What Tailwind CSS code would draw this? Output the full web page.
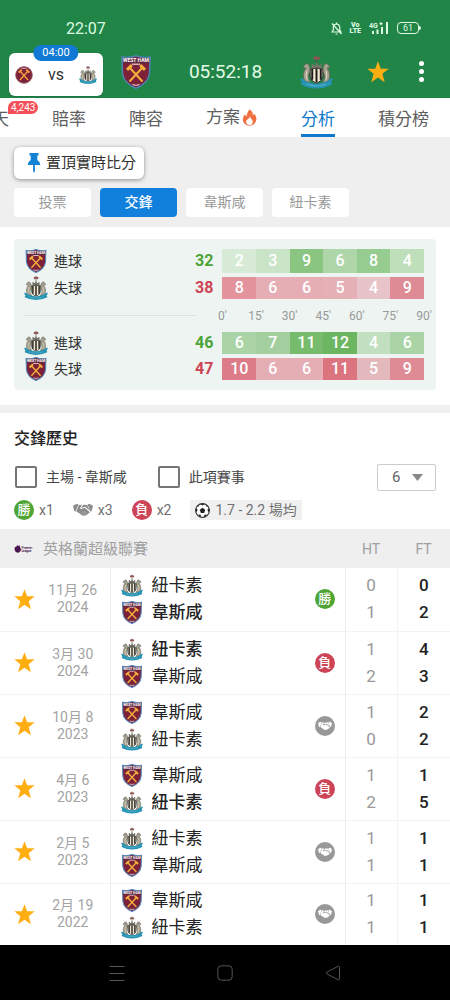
<!DOCTYPE html>
<html lang="zh-Hant">
<head>
<meta charset="utf-8">
<meta name="viewport" content="width=device-width, initial-scale=1">
<title>韋斯咸 vs 紐卡素 - 分析</title>
<script src="https://cdn.jsdelivr.net/npm/@tailwindcss/browser@4"></script>
</head>
<body class="flex min-h-screen flex-col bg-white font-['Roboto','Noto_Sans_CJK_TC',sans-serif] text-[#222]">

<svg class="hidden" aria-hidden="true">
  <symbol id="whu" viewBox="0 0 30 34">
    <path d="M1 2Q8 3.500 15 .8Q22 3.500 29 2L28.500 18Q27.500 28 15 33.300Q2.500 28 1.500 18Z" fill="#7c2138" stroke="#4f83b8" stroke-width="1.500"/>
    <path d="M2.300 3.400Q9 4.500 15 2.500Q21 4.500 27.700 3.400V8.500H2.300Z" fill="#62293f"/>
    <text x="15" y="7" text-anchor="middle" font-size="5" font-weight="700" fill="#fff">WEST HAM</text>
    <path d="M11 9.200H19" stroke="#e8d5dc" stroke-width="1.200"/>
    <path d="M8.500 12.500L21.500 26.500M21.500 12.500L8.500 26.500" stroke="#f2b13c" stroke-width="2"/>
    <path d="M6 14.800L10.800 10.200M24 14.800L19.200 10.200" stroke="#f2b13c" stroke-width="3"/>
    <path d="M11.500 29.600Q15 31 18.500 29.600" stroke="#e8d5dc" stroke-width="1.100" fill="none"/>
  </symbol>
  <symbol id="whu-round" viewBox="0 0 20 20">
    <circle cx="10" cy="10" r="9.200" fill="#7c2138" stroke="#8d4a5c" stroke-width="1"/>
    <path d="M5.500 5.500L14.500 15.500M14.500 5.500L5.500 15.500" stroke="#f2a13c" stroke-width="1.500"/>
    <path d="M4 7.400L7.400 4M16 7.400L12.600 4" stroke="#f2a13c" stroke-width="2.200"/>
    <path d="M7 2.600H13" stroke="#d9b5c0" stroke-width="1"/>
  </symbol>
  <symbol id="nufc" viewBox="0 0 34 34">
    <path d="M17 0V9" stroke="#555" stroke-width="1"/>
    <path d="M14 1.500Q17 .3 21 2L19.500 4.600Q17 3.500 14 4.600Z" fill="#91554f"/>
    <path d="M12 15V8.500H14V10H16V8H18.500V10H20.500V8.500H22V15Z" fill="#77756a"/>
    <path d="M10 12Q8 6.500 5.500 9L3 12L6 13Q3 17 3.500 22Q3.500 25 6 27L11 28Q7 23 9 19.500Q11.500 16 10 12Z" fill="#a5a18f" stroke="#666257" stroke-width=".8"/>
    <path d="M24 12Q26 6.500 28.500 9L31 12L28 13Q31 17 30.500 22Q30.500 25 28 27L23 28Q27 23 25 19.500Q22.500 16 24 12Z" fill="#a5a18f" stroke="#666257" stroke-width=".8"/>
    <path d="M7 16Q5.500 20 7.500 25M27 16Q28.500 20 26.500 25" stroke="#e0dcc9" stroke-width="1" fill="none"/>
    <path d="M10.500 14Q17 12 23.500 14V22Q23 26 17 29Q11 26 10.500 22Z" fill="#f1e7cf" stroke="#222" stroke-width=".9"/>
    <path d="M12.600 14V25M17 13.500V28M21.400 14V25" stroke="#1b1b1b" stroke-width="2"/>
    <path d="M0 24Q3 23 5 26Q17 32 29 26Q31 23 34 24L32 27.500L33 30Q25 34 17 34Q9 34 1 30L2 27.500Z" fill="#2593b4"/>
    <path d="M7 29.500Q17 33 27 29.500" stroke="#8cc8d9" stroke-width=".9" stroke-dasharray="1.500 .8" fill="none"/>
  </symbol>
  <symbol id="star" viewBox="0 0 20 20">
    <path d="M10 .3L12.500 7H19.700L14 11.600L16.100 19.300L10 14.900L3.900 19.300L6 11.600L.3 7H7.500Z" fill="currentColor"/>
  </symbol>
  <symbol id="shake" viewBox="0 0 24 16">
    <path d="M0 3L4.500 .5L6.500 1.500L3 10L1.500 9Z M24 3L19.500 .5L17.500 1.500L21 10L22.500 9Z" fill="currentColor"/>
    <path d="M7 2L11 1.800L8.500 5.500Q9 8 12 6L14 5.300L20 10.300Q20.400 12 18.500 12Q18.300 13.700 16.500 13.300Q15.800 15 14 14.200Q12.600 15.800 11 14.300L4 9.800Z" fill="currentColor"/>
    <path d="M12.300 1.800L17 2L20.200 8.900L14.600 4L11.500 5Q10 5.700 10 4.900Z" fill="currentColor"/>
    <path d="M12.500 9.500L16 12.300M10.500 11L13.500 13.700" stroke="#fff" stroke-opacity=".5" stroke-width=".6"/>
  </symbol>
</svg>

<header class="bg-[#228548] text-white">
  <div class="flex h-[45px] items-end justify-between pr-[29px] pl-[66px] text-[#dcfbe3]">
    <time class="pb-1.5 text-base leading-5">22:07</time>
    <div class="flex items-center gap-2 pb-2.5">
      <svg class="h-[13px] w-[11px]" viewBox="0 0 11 13" fill="none" stroke="currentColor" stroke-width="1.200"><path d="M1 10H10L8.700 8V5Q8.500 2.300 5.500 2Q2.500 2.300 2.300 5V8ZM4.500 12H6.500M5.500 2V.5M1 1.500L10.500 12"/></svg>
      <span class="flex flex-col text-center text-[7px] leading-[6px] font-black"><span>Vo</span><span>LTE</span></span>
      <svg class="h-[14px] w-5" viewBox="0 0 20 14" fill="currentColor"><text x="0" y="6.500" font-size="7" font-weight="700">4G</text><path d="M10.500 2H13.500V3.200H10.500ZM11.400 1H12.600V4.200H11.400ZM3 10H5V13H3ZM7.500 8.500H9.500V13H7.500ZM12 6H14V13H12ZM17 1H19V13H17Z"/></svg>
      <span class="flex items-center"><span class="flex h-3 w-[22px] items-center justify-center rounded border border-current text-[9px] leading-none">61</span><span class="h-1 w-0.5 rounded-r bg-current"></span></span>
    </div>
  </div>
  <div class="flex h-[53px] items-center justify-between pr-[19px] pl-[9px]">
    <button type="button" class="relative mt-1.5 flex h-[43px] w-[94px] items-center justify-between rounded-md bg-white px-1.5 text-[#333] shadow">
      <svg class="h-[18px] w-[18px]"><use href="#whu-round"/></svg>
      <span class="text-base leading-5">vs</span>
      <svg class="h-[18px] w-[18px]"><use href="#nufc"/></svg>
      <span class="absolute -top-2 left-1/2 -translate-x-1/2 rounded-full bg-[#1079d4] px-[9px] text-[11px] leading-4 text-white">04:00</span>
    </button>
    <svg class="h-[34px] w-[30px]"><use href="#whu"/></svg>
    <span class="mx-5 text-[19px] leading-6 text-[#e4fbe9]">05:52:18</span>
    <svg class="h-[34px] w-[33px]"><use href="#nufc"/></svg>
    <button type="button" aria-label="收藏" class="ml-4 text-[#ffae12]"><svg class="h-[22px] w-[22px]"><use href="#star"/></svg></button>
    <button type="button" aria-label="更多" class="ml-2.5 flex w-[14px] flex-col items-center gap-[3px] pr-1"><span class="h-[5px] w-[5px] shrink-0 rounded-full bg-white"></span><span class="h-[5px] w-[5px] shrink-0 rounded-full bg-white"></span><span class="h-[5px] w-[5px] shrink-0 rounded-full bg-white"></span></button>
  </div>
</header>

<nav class="h-[39px] overflow-hidden bg-white">
  <div class="-ml-2 flex h-full items-stretch gap-[43px] text-[17px] leading-[43px] whitespace-nowrap text-[#606060]">
    <a href="#chat" class="relative shrink-0">天<span class="absolute top-[3px] left-4 rounded-full rounded-bl-sm bg-[#f4505a] px-[3px] text-[10px] leading-[13px] text-white">4,243</span></a>
    <a href="#odds" class="shrink-0">賠率</a>
    <a href="#lineup" class="shrink-0">陣容</a>
    <a href="#tips" class="flex shrink-0 items-center gap-0.5 pr-px">方案<svg class="h-[17px] w-[15px]" viewBox="0 0 15 17"><path d="M7.500 .3Q11.500 3 10.500 6.500Q12 6 11.800 4.200Q15 7.500 14.300 11Q13 16.500 7.500 16.700Q1.500 16.300 .8 11Q.5 7.500 3.300 5Q3.300 7 4.500 7.600Q5 3.500 7.500 .3Z" fill="#ee7040"/><path d="M8 7Q8 9.500 10 10.500Q12 13.500 9 16Q4.500 16.500 4 13Q4 11 6 10Q8 9 8 7Z" fill="#fff"/></svg></a>
    <a href="#analysis" aria-current="page" class="shrink-0 border-b-3 border-[#1179cc] text-[#1179cc]">分析</a>
    <a href="#standings" class="shrink-0">積分榜</a>
  </div>
</nav>

<main class="flex-1">
  <section class="bg-[#efefef] px-[14px] pt-[10px] pb-[10px]">
    <button type="button" class="flex h-8 items-center gap-1 rounded-md bg-white pr-2 pl-3 text-[15px] leading-5 text-[#333] shadow-[0_1px_4px_rgba(0,0,0,0.4)]">
      <svg class="h-5 w-4" viewBox="0 0 16 20" fill="#1381d4"><path d="M3.500 0H12.500V2.500H11.300V7Q14 8.500 14.300 12H8.900V18L8 20L7.100 18V12H1.700Q2 8.500 4.700 7V2.500H3.500Z"/></svg>置頂實時比分
    </button>
    <div class="mt-[9px] flex gap-[9px] text-sm leading-[29px] text-[#999]">
      <button type="button" class="w-[77px] rounded bg-white">投票</button>
      <button type="button" class="w-[77px] rounded bg-[#1080dc] font-medium text-white">交鋒</button>
      <button type="button" class="w-[77px] rounded bg-white">韋斯咸</button>
      <button type="button" class="w-[77px] rounded bg-white">紐卡素</button>
    </div>
  </section>

  <section class="border-b-8 border-[#f0f0f0] px-[14px] pt-3 pb-[15px]">
    <div class="rounded bg-[#edf4f1] py-1.5 pr-3 pl-[10px]">
      <table class="w-full table-fixed border-separate border-spacing-x-0 border-spacing-y-1 text-base leading-[22px]">
        <colgroup><col><col class="w-[7%]"><col class="w-[8.4%]"><col class="w-[8.4%]"><col class="w-[8.4%]"><col class="w-[8.4%]"><col class="w-[8.4%]"><col class="w-[8.4%]"></colgroup>
        <tbody class="text-center font-medium text-white">
          <tr>
            <th scope="row" class="p-0 text-left text-sm font-normal text-[#333]"><span class="flex h-6 items-center gap-1.5"><svg class="h-6 w-6 shrink-0"><use href="#whu"/></svg>進球</span></th>
            <td class="p-0 pr-[9px] text-right font-bold text-[#4da336]">32</td>
            <td class="bg-[#d7ead6] p-0">2</td><td class="bg-[#c9e4c6] p-0">3</td><td class="bg-[#8ac681] p-0">9</td><td class="bg-[#aed6a9] p-0">6</td><td class="bg-[#97cc90] p-0">8</td><td class="bg-[#bfdfbb] p-0">4</td>
          </tr>
          <tr>
            <th scope="row" class="p-0 text-left text-sm font-normal text-[#333]"><span class="flex h-[22px] items-center gap-1.5"><svg class="h-6 w-6 shrink-0"><use href="#nufc"/></svg>失球</span></th>
            <td class="p-0 pr-[9px] text-right font-bold text-[#cf4455]">38</td>
            <td class="bg-[#e3939c] p-0">8</td><td class="bg-[#e5aeb5] p-0">6</td><td class="bg-[#e5aeb5] p-0">6</td><td class="bg-[#e6b0b7] p-0">5</td><td class="bg-[#e8c3c9] p-0">4</td><td class="bg-[#de8b95] p-0">9</td>
          </tr>
        </tbody>
      </table>
      <div class="flex h-[25px] items-center">
        <div class="mr-[26px] h-px flex-1 bg-[#dde2df]"></div>
        <div class="flex w-[50.4%] justify-between text-xs leading-4 text-[#999]">
          <span class="flex w-0 justify-center">0'</span><span class="flex w-0 justify-center">15'</span><span class="flex w-0 justify-center">30'</span><span class="flex w-0 justify-center">45'</span><span class="flex w-0 justify-center">60'</span><span class="flex w-0 justify-center">75'</span><span class="flex w-0 justify-center">90'</span>
        </div>
      </div>
      <table class="w-full table-fixed border-separate border-spacing-x-0 border-spacing-y-1 text-base leading-[22px]">
        <colgroup><col><col class="w-[7%]"><col class="w-[8.4%]"><col class="w-[8.4%]"><col class="w-[8.4%]"><col class="w-[8.4%]"><col class="w-[8.4%]"><col class="w-[8.4%]"></colgroup>
        <tbody class="text-center font-medium text-white">
          <tr>
            <th scope="row" class="p-0 text-left text-sm font-normal text-[#333]"><span class="flex h-[22px] items-center gap-1.5"><svg class="h-6 w-6 shrink-0"><use href="#nufc"/></svg>進球</span></th>
            <td class="p-0 pr-[9px] text-right font-bold text-[#4da336]">46</td>
            <td class="bg-[#aad4a6] p-0">6</td><td class="bg-[#a2cf9d] p-0">7</td><td class="bg-[#77bb6c] p-0">11</td><td class="bg-[#6cb561] p-0">12</td><td class="bg-[#c2dfc0] p-0">4</td><td class="bg-[#aad4a6] p-0">6</td>
          </tr>
          <tr>
            <th scope="row" class="p-0 text-left text-sm font-normal text-[#333]"><span class="flex h-[22px] items-center gap-1.5"><svg class="h-6 w-6 shrink-0"><use href="#whu"/></svg>失球</span></th>
            <td class="p-0 pr-[9px] text-right font-bold text-[#cf4455]">47</td>
            <td class="bg-[#db7c88] p-0">10</td><td class="bg-[#e5aeb5] p-0">6</td><td class="bg-[#e5aeb5] p-0">6</td><td class="bg-[#dc7480] p-0">11</td><td class="bg-[#e3b9be] p-0">5</td><td class="bg-[#de8b95] p-0">9</td>
          </tr>
        </tbody>
      </table>
    </div>
  </section>

  <section>
    <div class="px-[14px] pt-4 pb-[9px]">
      <h2 class="text-base leading-5 font-medium">交鋒歷史</h2>
      <div class="mt-[14px] flex h-7 items-center text-sm leading-5 text-[#444]">
        <label class="flex items-center gap-[9px]"><input type="checkbox" class="ml-px h-[22px] w-[22px] appearance-none rounded-xs border-2 border-[#757575]">主場 - 韋斯咸</label>
        <label class="ml-[31px] flex items-center gap-[9px]"><input type="checkbox" class="h-[22px] w-[22px] appearance-none rounded-xs border-2 border-[#757575]">此項賽事</label>
        <div class="relative ml-auto">
          <select aria-label="場數" class="h-[27px] w-[59px] appearance-none rounded-xs border border-[#ccc] pl-[14px] text-[15px] text-[#666]"><option>6</option><option>10</option></select>
          <svg class="pointer-events-none absolute top-[10px] right-[13px] h-[7px] w-[11px]" viewBox="0 0 11 7"><path d="M0 0H11L5.500 7Z" fill="#888"/></svg>
        </div>
      </div>
      <div class="mt-[9px] flex h-5 items-center gap-[19px] text-sm leading-5 text-[#707070]">
        <span class="flex items-center gap-[5px]"><span class="h-5 w-5 rounded-full bg-[#4ea435] text-center text-[13px] font-medium text-white">勝</span>x1</span>
        <span class="flex items-center gap-[5px]"><svg class="h-[14px] w-5 text-[#8c8c8c]"><use href="#shake"/></svg>x3</span>
        <span class="flex items-center gap-[5px]"><span class="h-5 w-5 rounded-full bg-[#cc4456] text-center text-[13px] font-medium text-white">負</span>x2</span>
        <span class="flex items-center gap-[5px] bg-[#f0f0f0] px-[5px]"><svg class="h-[15px] w-[15px]" viewBox="0 0 15 15"><circle cx="7.500" cy="7.500" r="6.900" fill="#fff" stroke="#333" stroke-width="1.200"/><path d="M7.500 4.700L10.200 6.700L9.200 9.900H5.800L4.800 6.700ZM5.300 1L7.500 2.400L9.700 1L7.500 .5ZM1 5.200L2.600 6.500L1.800 9L.8 8ZM14 5.200L12.400 6.500L13.200 9L14.200 8ZM3.500 11.500L5.600 11.800L6.300 14L4 13ZM11.500 11.500L9.400 11.800L8.700 14L11 13ZM2 3.500L3.500 1.900L4.200 3.200ZM13 3.500L11.500 1.900L10.800 3.200Z" fill="#222"/></svg>1.7 - 2.2 場均</span>
      </div>
    </div>

    <table class="w-full table-fixed border-collapse">
      <colgroup><col class="w-12"><col class="w-[62px]"><col><col class="w-10"><col class="w-[52px]"><col class="w-[53px]"></colgroup>
      <thead class="bg-[#efefef] text-[#a0a0a0]">
        <tr class="h-[39px]">
          <th scope="col" colspan="4" class="p-0 pl-[14px] text-left text-[15px] leading-5 font-normal"><span class="flex items-center gap-[9px]"><svg class="h-2.5 w-5" viewBox="0 0 20 10" fill="#4a1450"><path d="M1 3L2.500 2.700L3 1L4.200 2L5.500 1.200L6 3L7 5.500Q6.500 8.500 3.800 8.800Q.8 8 .5 5.500Z"/><text x="7.500" y="4.700" font-size="3" font-weight="700">Premier</text><text x="7.500" y="8" font-size="3" font-weight="700">League</text></svg>英格蘭超級聯賽</span></th>
          <th scope="col" class="p-0 text-sm font-normal">HT</th>
          <th scope="col" class="p-0 text-sm font-normal">FT</th>
        </tr>
      </thead>
      <tbody class="text-center text-[17px] leading-[27px]">
        <tr class="h-[63px] border-b border-[#f3f3f3]">
          <td class="p-0 align-middle"><button type="button" aria-label="收藏" class="block w-full text-[#ffae12]"><svg class="mx-auto h-[21px] w-[21px]"><use href="#star"/></svg></button></td>
          <td class="border-r border-[#ececec] p-0 pr-3 text-sm leading-[17px] text-[#a3a3a3]">11月 26<br>2024</td>
          <td class="p-0 pl-[10px] text-left"><div class="flex items-center gap-[9px]"><svg class="h-[23px] w-[22px] shrink-0"><use href="#nufc"/></svg>紐卡素</div><div class="flex items-center gap-[9px] font-medium"><svg class="h-[23px] w-[22px] shrink-0"><use href="#whu"/></svg>韋斯咸</div></td>
          <td class="border-r border-[#ececec] p-0"><span class="mx-auto block h-5 w-5 rounded-full bg-[#4ea435] text-[13px] leading-5 font-medium text-white">勝</span></td>
          <td class="border-r border-[#f3f3f3] p-0 text-[#999]">0<br>1</td>
          <td class="p-0 font-medium">0<br>2</td>
        </tr>
        <tr class="h-[63px] border-b border-[#f3f3f3]">
          <td class="p-0 align-middle"><button type="button" aria-label="收藏" class="block w-full text-[#ffae12]"><svg class="mx-auto h-[21px] w-[21px]"><use href="#star"/></svg></button></td>
          <td class="border-r border-[#ececec] p-0 pr-3 text-sm leading-[17px] text-[#a3a3a3]">3月 30<br>2024</td>
          <td class="p-0 pl-[10px] text-left"><div class="flex items-center gap-[9px] font-medium"><svg class="h-[23px] w-[22px] shrink-0"><use href="#nufc"/></svg>紐卡素</div><div class="flex items-center gap-[9px]"><svg class="h-[23px] w-[22px] shrink-0"><use href="#whu"/></svg>韋斯咸</div></td>
          <td class="border-r border-[#ececec] p-0"><span class="mx-auto block h-5 w-5 rounded-full bg-[#cc4456] text-[13px] leading-5 font-medium text-white">負</span></td>
          <td class="border-r border-[#f3f3f3] p-0 text-[#999]">1<br>2</td>
          <td class="p-0 font-medium">4<br>3</td>
        </tr>
        <tr class="h-[63px] border-b border-[#f3f3f3]">
          <td class="p-0 align-middle"><button type="button" aria-label="收藏" class="block w-full text-[#ffae12]"><svg class="mx-auto h-[21px] w-[21px]"><use href="#star"/></svg></button></td>
          <td class="border-r border-[#ececec] p-0 pr-3 text-sm leading-[17px] text-[#a3a3a3]">10月 8<br>2023</td>
          <td class="p-0 pl-[10px] text-left"><div class="flex items-center gap-[9px]"><svg class="h-[23px] w-[22px] shrink-0"><use href="#whu"/></svg>韋斯咸</div><div class="flex items-center gap-[9px]"><svg class="h-[23px] w-[22px] shrink-0"><use href="#nufc"/></svg>紐卡素</div></td>
          <td class="border-r border-[#ececec] p-0"><span class="mx-auto flex h-5 w-5 items-center justify-center rounded-full bg-[#989898] text-white"><svg class="h-2.5 w-[14px]"><use href="#shake"/></svg></span></td>
          <td class="border-r border-[#f3f3f3] p-0 text-[#999]">1<br>0</td>
          <td class="p-0 font-medium">2<br>2</td>
        </tr>
        <tr class="h-[63px] border-b border-[#f3f3f3]">
          <td class="p-0 align-middle"><button type="button" aria-label="收藏" class="block w-full text-[#ffae12]"><svg class="mx-auto h-[21px] w-[21px]"><use href="#star"/></svg></button></td>
          <td class="border-r border-[#ececec] p-0 pr-3 text-sm leading-[17px] text-[#a3a3a3]">4月 6<br>2023</td>
          <td class="p-0 pl-[10px] text-left"><div class="flex items-center gap-[9px]"><svg class="h-[23px] w-[22px] shrink-0"><use href="#whu"/></svg>韋斯咸</div><div class="flex items-center gap-[9px] font-medium"><svg class="h-[23px] w-[22px] shrink-0"><use href="#nufc"/></svg>紐卡素</div></td>
          <td class="border-r border-[#ececec] p-0"><span class="mx-auto block h-5 w-5 rounded-full bg-[#cc4456] text-[13px] leading-5 font-medium text-white">負</span></td>
          <td class="border-r border-[#f3f3f3] p-0 text-[#999]">1<br>2</td>
          <td class="p-0 font-medium">1<br>5</td>
        </tr>
        <tr class="h-[63px] border-b border-[#f3f3f3]">
          <td class="p-0 align-middle"><button type="button" aria-label="收藏" class="block w-full text-[#ffae12]"><svg class="mx-auto h-[21px] w-[21px]"><use href="#star"/></svg></button></td>
          <td class="border-r border-[#ececec] p-0 pr-3 text-sm leading-[17px] text-[#a3a3a3]">2月 5<br>2023</td>
          <td class="p-0 pl-[10px] text-left"><div class="flex items-center gap-[9px]"><svg class="h-[23px] w-[22px] shrink-0"><use href="#nufc"/></svg>紐卡素</div><div class="flex items-center gap-[9px]"><svg class="h-[23px] w-[22px] shrink-0"><use href="#whu"/></svg>韋斯咸</div></td>
          <td class="border-r border-[#ececec] p-0"><span class="mx-auto flex h-5 w-5 items-center justify-center rounded-full bg-[#989898] text-white"><svg class="h-2.5 w-[14px]"><use href="#shake"/></svg></span></td>
          <td class="border-r border-[#f3f3f3] p-0 text-[#999]">1<br>1</td>
          <td class="p-0 font-medium">1<br>1</td>
        </tr>
        <tr class="h-[62px]">
          <td class="p-0 align-middle"><button type="button" aria-label="收藏" class="block w-full text-[#ffae12]"><svg class="mx-auto h-[21px] w-[21px]"><use href="#star"/></svg></button></td>
          <td class="border-r border-[#ececec] p-0 pr-3 text-sm leading-[17px] text-[#a3a3a3]">2月 19<br>2022</td>
          <td class="p-0 pl-[10px] text-left"><div class="flex items-center gap-[9px]"><svg class="h-[23px] w-[22px] shrink-0"><use href="#whu"/></svg>韋斯咸</div><div class="flex items-center gap-[9px]"><svg class="h-[23px] w-[22px] shrink-0"><use href="#nufc"/></svg>紐卡素</div></td>
          <td class="border-r border-[#ececec] p-0"><span class="mx-auto flex h-5 w-5 items-center justify-center rounded-full bg-[#989898] text-white"><svg class="h-2.5 w-[14px]"><use href="#shake"/></svg></span></td>
          <td class="border-r border-[#f3f3f3] p-0 text-[#999]">1<br>1</td>
          <td class="p-0 font-medium">1<br>1</td>
        </tr>
      </tbody>
    </table>
  </section>
</main>

<footer class="flex h-[55px] items-center justify-center gap-[92px] bg-black text-[#555]">
  <button type="button" aria-label="最近"><svg class="block h-4 w-4" viewBox="0 0 16 16" fill="none" stroke="currentColor"><path d="M.5 1.500H15.500M.5 8.500H15.500M.5 15.500H15.500"/></svg></button>
  <button type="button" aria-label="主頁"><svg class="block h-4 w-4" viewBox="0 0 16 16" fill="none" stroke="currentColor"><rect x=".8" y=".8" width="14.400" height="14.400" rx="3.500"/></svg></button>
  <button type="button" aria-label="返回"><svg class="block h-4 w-4" viewBox="0 0 16 16" fill="none" stroke="currentColor" stroke-linejoin="round"><path d="M1.500 7.300L13.300 1.200Q14.500 1 14.500 2.200V13.800Q14.500 15 13.300 14.800L1.500 8.700Q.8 8 1.500 7.300Z"/></svg></button>
</footer>
</body>
</html>
